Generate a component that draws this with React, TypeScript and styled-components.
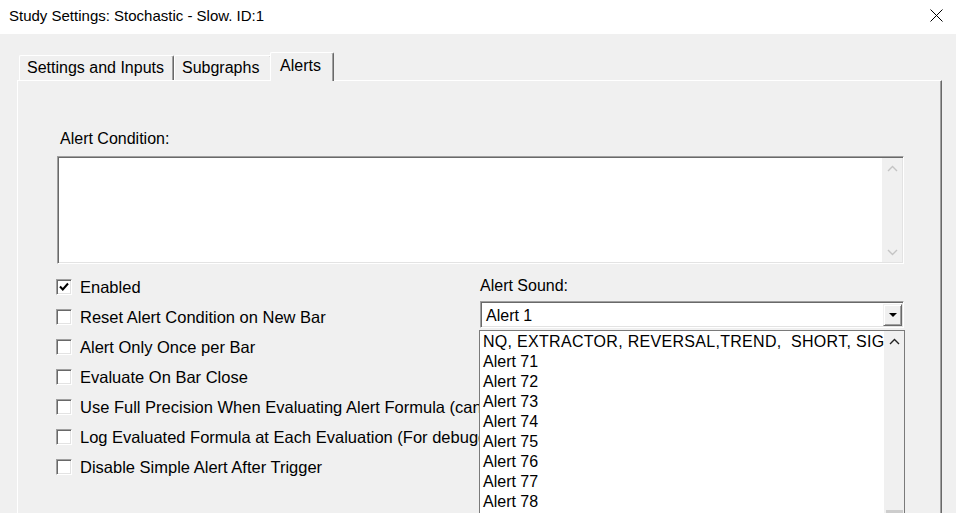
import React from 'react';
import styled, { createGlobalStyle } from 'styled-components';

const GlobalStyle = createGlobalStyle`
  html, body {
    margin: 0;
    padding: 0;
    background: #f0f0f0;
  }
  body {
    font-family: "Liberation Sans", Arial, sans-serif;
    font-size: 16px;
    color: #000;
  }
`;

const checks = [
  { label: 'Enabled', checked: true },
  { label: 'Reset Alert Condition on New Bar', checked: false },
  { label: 'Alert Only Once per Bar', checked: false },
  { label: 'Evaluate On Bar Close', checked: false },
  { label: 'Use Full Precision When Evaluating Alert Formula (can be slower)', checked: false },
  { label: 'Log Evaluated Formula at Each Evaluation (For debugging)', checked: false },
  { label: 'Disable Simple Alert After Trigger', checked: false },
];

const sounds = [
  'NQ, EXTRACTOR, REVERSAL,TREND,  SHORT, SIGNAL',
  'Alert 71',
  'Alert 72',
  'Alert 73',
  'Alert 74',
  'Alert 75',
  'Alert 76',
  'Alert 77',
  'Alert 78',
  'Alert 79',
];

const tabs = [
  { label: 'Settings and Inputs', width: 155 },
  { label: 'Subgraphs', width: 98 },
  { label: 'Alerts', width: 64, active: true },
];

const Chevron = ({ up, color }: { up?: boolean; color: string }) => (
  <svg width="11" height="7" viewBox="0 0 11 7">
    <polyline
      points={up ? '1,6 5.5,1.5 10,6' : '1,1 5.5,5.5 10,1'}
      fill="none"
      stroke={color}
      strokeWidth="1.4"
    />
  </svg>
);

const App = () => {
  return (
    <>
      <GlobalStyle />
      <Window>
        <TitleBar>
          <Title>Study Settings: Stochastic - Slow. ID:1</Title>
          <svg width="13" height="13" viewBox="0 0 13 13">
            <path d="M0.5 0.5 L12.5 12.5 M12.5 0.5 L0.5 12.5" stroke="#000" strokeWidth="1" />
          </svg>
        </TitleBar>
        <Body>
          <TabStrip>
            {tabs.map((t) => (
              <Tab key={t.label} active={t.active} w={t.width}>
                {t.label}
              </Tab>
            ))}
          </TabStrip>
          <Panel>
            <FieldLabel indent={3}>Alert Condition:</FieldLabel>
            <ConditionBox>
              <ConditionText />
              <ScrollBar>
                <ArrowCell>
                  <Chevron up color="#c4c4c4" />
                </ArrowCell>
                <ArrowCell>
                  <Chevron color="#c4c4c4" />
                </ArrowCell>
              </ScrollBar>
            </ConditionBox>
            <Lower>
              <CheckList>
                {checks.map((c) => (
                  <CheckRow key={c.label}>
                    <CheckBox>
                      {c.checked && (
                        <svg width="10" height="10" viewBox="0 0 10 10">
                          <polyline points="1,4.5 3.8,7.5 9,1.5" fill="none" stroke="#000" strokeWidth="2" />
                        </svg>
                      )}
                    </CheckBox>
                    <CheckLabel>{c.label}</CheckLabel>
                  </CheckRow>
                ))}
              </CheckList>
              <SoundColumn>
                <FieldLabel indent={0}>Alert Sound:</FieldLabel>
                <Combo>
                  <ComboText>Alert 1</ComboText>
                  <DropButton>
                    <DropArrow />
                  </DropButton>
                  <DropList>
                    <DropItems>
                      {sounds.map((s, i) => (
                        <DropItem key={s} wide={i === 0}>
                          {s}
                        </DropItem>
                      ))}
                    </DropItems>
                    <ListScroll>
                      <ArrowCell>
                        <Chevron up color="#222" />
                      </ArrowCell>
                      <Thumb />
                    </ListScroll>
                  </DropList>
                </Combo>
              </SoundColumn>
            </Lower>
          </Panel>
        </Body>
      </Window>
    </>
  );
};

const Window = styled.div`
  width: 956px;
  height: 513px;
  overflow: hidden;
  display: flex;
  flex-direction: column;
  background: #f0f0f0;
`;

const TitleBar = styled.div`
  height: 34px;
  flex-shrink: 0;
  box-sizing: border-box;
  background: #fff;
  display: flex;
  align-items: center;
  justify-content: space-between;
  padding: 0 13px 4px 9px;
`;

const Title = styled.span`
  font-size: 15px;
  color: #000;
`;

const Body = styled.div`
  flex: 1;
  display: flex;
  flex-direction: column;
  padding: 18px 14px 0 17px;
`;

const TabStrip = styled.div`
  position: relative;
  z-index: 1;
  display: flex;
  align-items: flex-start;
  height: 29px;
  margin-bottom: -1px;
  padding-left: 2px;
`;

const Tab = styled.div<{ active?: boolean; w: number }>`
  box-sizing: border-box;
  width: ${(p) => p.w}px;
  flex-shrink: 0;
  height: ${(p) => (p.active ? '29px' : '25px')};
  margin-top: ${(p) => (p.active ? '0' : '3px')};
  margin-left: ${(p) => (p.active ? '-2px' : '0')};
  padding: ${(p) => (p.active ? '0 0 3px 9px' : '0 0 0 7px')};
  display: flex;
  align-items: center;
  background: #f0f0f0;
  border-top: 1px solid #fff;
  border-left: 1px solid #fff;
  border-right: 1px solid #696969;
  border-radius: 2px 2px 0 0;
  box-shadow: inset -1px 0 0 #a0a0a0;
  white-space: nowrap;
`;

const Panel = styled.div`
  flex: 1;
  width: 925px;
  box-sizing: border-box;
  border-top: 1px solid #fff;
  border-left: 1px solid #fff;
  border-right: 1px solid #696969;
  box-shadow: inset -1px 0 0 #a0a0a0;
  padding: 48px 0 0 39px;
  display: flex;
  flex-direction: column;
`;

const FieldLabel = styled.div<{ indent: number }>`
  line-height: 18px;
  padding-top: ${(p) => (p.indent ? '1px' : '0')};
  padding-left: ${(p) => p.indent}px;
  margin-bottom: ${(p) => (p.indent ? '8px' : '6px')};
`;

const ConditionBox = styled.div`
  width: 847px;
  height: 108px;
  box-sizing: border-box;
  display: flex;
  background: #fff;
  border: 1px solid;
  border-color: #a0a0a0 #fff #fff #a0a0a0;
  box-shadow: inset 1px 1px 0 #696969, inset -1px -1px 0 #e3e3e3;
  padding: 1px;
`;

const ConditionText = styled.div`
  flex: 1;
`;

const ScrollBar = styled.div`
  width: 20px;
  background: #f0f0f0;
  display: flex;
  flex-direction: column;
  justify-content: space-between;
`;

const ArrowCell = styled.div`
  height: 20px;
  display: flex;
  align-items: center;
  justify-content: center;
  flex-shrink: 0;
`;

const Lower = styled.div`
  display: grid;
  grid-template-columns: 424px 424px;
  margin: 8px 0 0 -1px;
`;

const CheckList = styled.div`
  display: flex;
  flex-direction: column;
`;

const CheckRow = styled.div`
  height: 30px;
  display: flex;
  align-items: center;
  gap: 8px;
`;

const CheckBox = styled.div`
  width: 16px;
  height: 16px;
  box-sizing: border-box;
  flex-shrink: 0;
  display: flex;
  align-items: center;
  justify-content: center;
  background: #fff;
  border: 1px solid;
  border-color: #a0a0a0 #fff #fff #a0a0a0;
  box-shadow: inset 1px 1px 0 #696969, inset -1px -1px 0 #e3e3e3;
`;

const CheckLabel = styled.span`
  white-space: nowrap;
  line-height: 18px;
  font-size: 16.5px;
`;

const SoundColumn = styled.div`
  padding-top: 5px;
  display: flex;
  flex-direction: column;
`;

const Combo = styled.div`
  position: relative;
  height: 27px;
  box-sizing: border-box;
  display: flex;
  align-items: stretch;
  background: #fff;
  border: 1px solid;
  border-color: #a0a0a0 #fff #fff #a0a0a0;
  box-shadow: inset 1px 1px 0 #696969, inset -1px -1px 0 #e3e3e3;
  padding: 2px 1px 1px 2px;
`;

const ComboText = styled.div`
  flex: 1;
  display: flex;
  align-items: center;
  padding: 1px 0 0 3px;
`;

const DropButton = styled.div`
  width: 19px;
  box-sizing: border-box;
  display: flex;
  align-items: center;
  justify-content: center;
  background: #f0f0f0;
  border: 1px solid;
  border-color: #f0f0f0 #696969 #696969 #f0f0f0;
  box-shadow: inset 1px 1px 0 #fff, inset -1px -1px 0 #a0a0a0;
`;

const DropArrow = styled.div`
  width: 0;
  height: 0;
  border-left: 4px solid transparent;
  border-right: 4px solid transparent;
  border-top: 4px solid #000;
`;

const DropList = styled.div`
  position: absolute;
  z-index: 2;
  top: calc(100% + 3px);
  left: -2px;
  right: -2px;
  height: 200px;
  display: flex;
  background: #fff;
  border: 1px solid #7a7a7a;
`;

const DropItems = styled.div`
  flex: 1;
  overflow: hidden;
  padding: 1px 0 0 3px;
`;

const DropItem = styled.div<{ wide?: boolean }>`
  height: 20px;
  line-height: 20px;
  white-space: pre;
  letter-spacing: ${(p) => (p.wide ? '0.3px' : '0')};
`;

const ListScroll = styled.div`
  width: 20px;
  background: #f0f0f0;
  display: flex;
  flex-direction: column;
  align-items: center;
`;

const Thumb = styled.div`
  width: 17px;
  height: 40px;
  margin-top: 159px;
  background: #cdcdcd;
`;

export default App;
